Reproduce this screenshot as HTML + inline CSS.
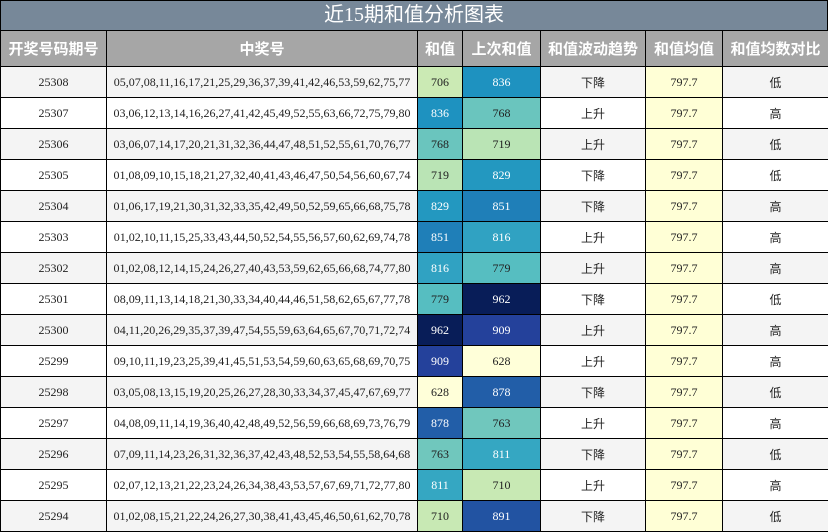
<!DOCTYPE html><html><head><meta charset="utf-8"><style>
body{margin:0;width:828px;height:532px;overflow:hidden;background:#fff}
.t{position:absolute;left:0;top:0;width:826px;height:29px;background:#778899;border:1px solid #000;border-bottom:none;color:#fff;font:20px "Liberation Serif","Noto Sans CJK SC",serif;text-align:center;line-height:29px}
table{position:absolute;left:0;top:30px;border-collapse:collapse;table-layout:fixed;width:828px}
td,th{border:1px solid #000;text-align:center;padding:0;overflow:hidden;white-space:nowrap}
th{background:#a6a6a6;color:#fff;font:bold 15px "Liberation Sans","Noto Sans CJK SC",sans-serif;height:35px}
td{height:30px;font:12px "Liberation Serif","Noto Sans CJK SC",serif;color:#222}
tr:nth-child(even) td{background:#f4f4f4}
tr:nth-child(odd) td{background:#fff}
td.a{background:#ffffd6!important}
td.w{color:#fff}
</style></head><body>
<div class="t">近15期和值分析图表</div>
<table>
<colgroup><col style="width:106px"><col style="width:311px"><col style="width:45px"><col style="width:78px"><col style="width:105px"><col style="width:77px"><col style="width:106px"></colgroup>
<tr><th>开奖号码期号</th><th>中奖号</th><th>和值</th><th>上次和值</th><th>和值波动趋势</th><th>和值均值</th><th>和值均数对比</th></tr>
<tr><td>25308</td><td>05,07,08,11,16,17,21,25,29,36,37,39,41,42,46,53,59,62,75,77</td><td style="background:#cbeab4">706</td><td class="w" style="background:#1e92c0">836</td><td>下降</td><td class="a">797.7</td><td>低</td></tr>
<tr><td>25307</td><td>03,06,12,13,14,16,26,27,41,42,45,49,52,55,63,66,72,75,79,80</td><td class="w" style="background:#1e92c0">836</td><td style="background:#6ac5be">768</td><td>上升</td><td class="a">797.7</td><td>高</td></tr>
<tr><td>25306</td><td>03,06,07,14,17,20,21,31,32,36,44,47,48,51,52,55,61,70,76,77</td><td style="background:#6ac5be">768</td><td style="background:#bae4b5">719</td><td>上升</td><td class="a">797.7</td><td>低</td></tr>
<tr><td>25305</td><td>01,08,09,10,15,18,21,27,32,40,41,43,46,47,50,54,56,60,67,74</td><td style="background:#bae4b5">719</td><td class="w" style="background:#2398c0">829</td><td>下降</td><td class="a">797.7</td><td>低</td></tr>
<tr><td>25304</td><td>01,06,17,19,21,30,31,32,33,35,42,49,50,52,59,65,66,68,75,78</td><td class="w" style="background:#2398c0">829</td><td class="w" style="background:#1f7fb8">851</td><td>下降</td><td class="a">797.7</td><td>高</td></tr>
<tr><td>25303</td><td>01,02,10,11,15,25,33,43,44,50,52,54,55,56,57,60,62,69,74,78</td><td class="w" style="background:#1f7fb8">851</td><td class="w" style="background:#30a2c2">816</td><td>上升</td><td class="a">797.7</td><td>高</td></tr>
<tr><td>25302</td><td>01,02,08,12,14,15,24,26,27,40,43,53,59,62,65,66,68,74,77,80</td><td class="w" style="background:#30a2c2">816</td><td style="background:#56bec1">779</td><td>上升</td><td class="a">797.7</td><td>高</td></tr>
<tr><td>25301</td><td>08,09,11,13,14,18,21,30,33,34,40,44,46,51,58,62,65,67,77,78</td><td style="background:#56bec1">779</td><td class="w" style="background:#081d58">962</td><td>下降</td><td class="a">797.7</td><td>低</td></tr>
<tr><td>25300</td><td>04,11,20,26,29,35,37,39,47,54,55,59,63,64,65,67,70,71,72,74</td><td class="w" style="background:#081d58">962</td><td class="w" style="background:#24419b">909</td><td>上升</td><td class="a">797.7</td><td>高</td></tr>
<tr><td>25299</td><td>09,10,11,19,23,25,39,41,45,51,53,54,59,60,63,65,68,69,70,75</td><td class="w" style="background:#24419b">909</td><td style="background:#ffffd9">628</td><td>上升</td><td class="a">797.7</td><td>高</td></tr>
<tr><td>25298</td><td>03,05,08,13,15,19,20,25,26,27,28,30,33,34,37,45,47,67,69,77</td><td style="background:#ffffd9">628</td><td class="w" style="background:#225ea8">878</td><td>下降</td><td class="a">797.7</td><td>低</td></tr>
<tr><td>25297</td><td>04,08,09,11,14,19,36,40,42,48,49,52,56,59,66,68,69,73,76,79</td><td class="w" style="background:#225ea8">878</td><td style="background:#70c7bd">763</td><td>上升</td><td class="a">797.7</td><td>高</td></tr>
<tr><td>25296</td><td>07,09,11,14,23,26,31,32,36,37,42,43,48,52,53,54,55,58,64,68</td><td style="background:#70c7bd">763</td><td class="w" style="background:#35a7c2">811</td><td>下降</td><td class="a">797.7</td><td>低</td></tr>
<tr><td>25295</td><td>02,07,12,13,21,22,23,24,26,34,38,43,53,57,67,69,71,72,77,80</td><td class="w" style="background:#35a7c2">811</td><td style="background:#c8e9b4">710</td><td>上升</td><td class="a">797.7</td><td>高</td></tr>
<tr><td>25294</td><td>01,02,08,15,21,22,24,26,27,30,38,41,43,45,46,50,61,62,70,78</td><td style="background:#c8e9b4">710</td><td class="w" style="background:#2253a2">891</td><td>下降</td><td class="a">797.7</td><td>低</td></tr>
</table>
</body></html>
